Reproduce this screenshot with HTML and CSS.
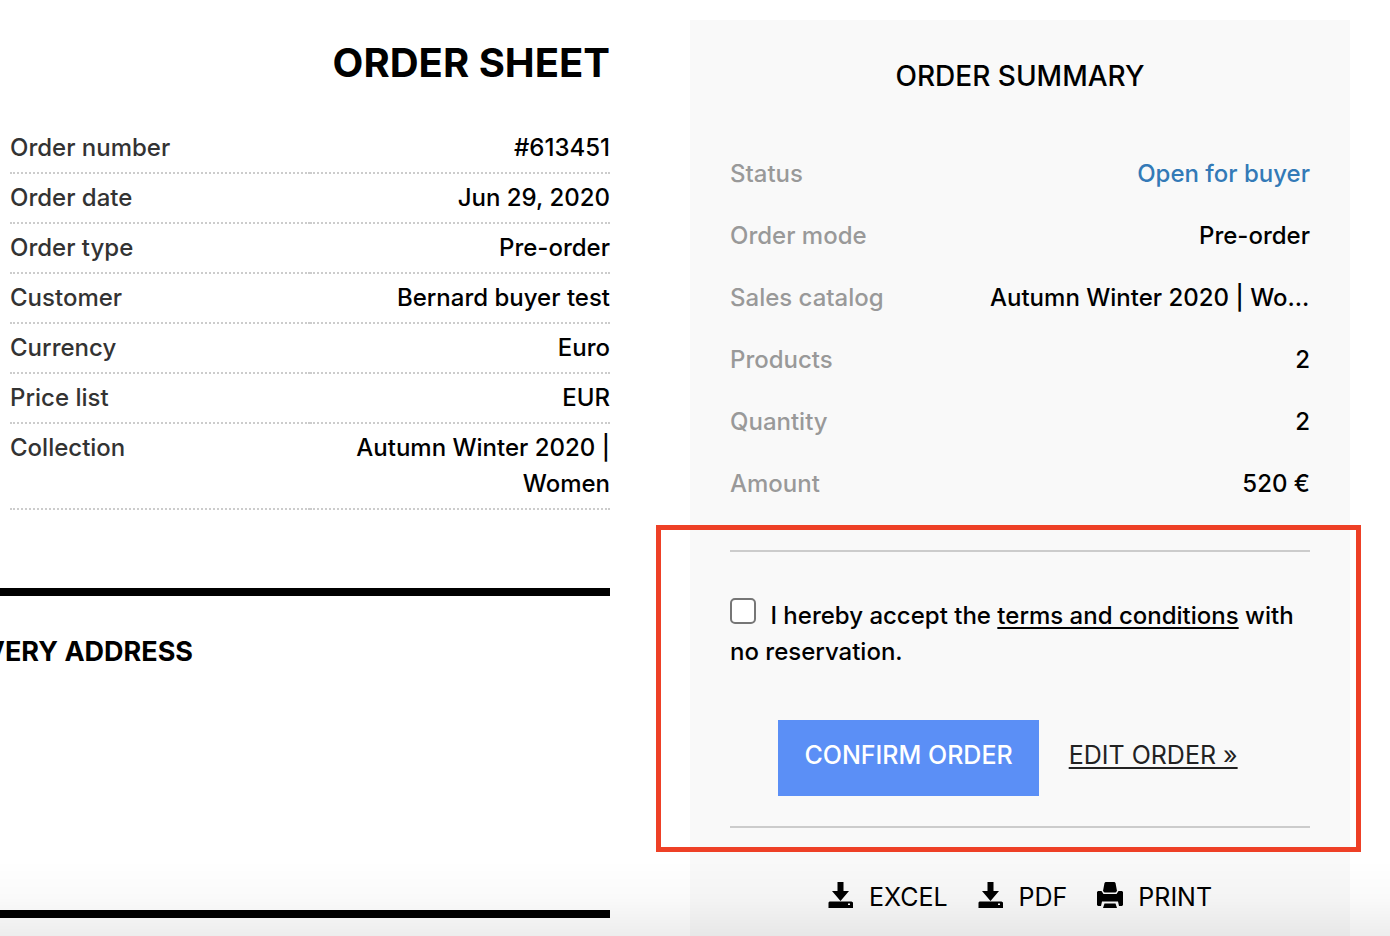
FILE: index.html
```html
<!DOCTYPE html>
<html lang="en">
<head>
  <meta charset="utf-8">
  <title>Order Sheet</title>
  <link rel="stylesheet" href="styles.css">
</head>
<body>
  <div class="page">
    <main class="sheet">
      <h1>ORDER SHEET</h1>
      <table class="details">
        <tbody>
          <tr><th scope="row">Order number</th><td>#613451</td></tr>
          <tr><th scope="row">Order date</th><td>Jun 29, 2020</td></tr>
          <tr><th scope="row">Order type</th><td>Pre-order</td></tr>
          <tr><th scope="row">Customer</th><td>Bernard buyer test</td></tr>
          <tr><th scope="row">Currency</th><td>Euro</td></tr>
          <tr><th scope="row">Price list</th><td>EUR</td></tr>
          <tr><th scope="row">Collection</th><td>Autumn Winter 2020 | Women</td></tr>
        </tbody>
      </table>
      <section class="address">
        <h2>DELIVERY ADDRESS</h2>
      </section>
    </main>

    <aside class="summary">
      <h2>ORDER SUMMARY</h2>
      <dl>
        <div><dt>Status</dt><dd class="open">Open for buyer</dd></div>
        <div><dt>Order mode</dt><dd>Pre-order</dd></div>
        <div><dt>Sales catalog</dt><dd class="catalog">Autumn Winter 2020 | Wo...</dd></div>
        <div><dt>Products</dt><dd>2</dd></div>
        <div><dt>Quantity</dt><dd>2</dd></div>
        <div><dt>Amount</dt><dd>520 €</dd></div>
      </dl>

      <form class="confirm">
        <p class="terms">
          <input type="checkbox" id="accept">
          <label for="accept">I hereby accept the <a href="#">terms and conditions</a> with no reservation.</label>
        </p>
        <div class="actions">
          <button type="button">CONFIRM ORDER</button>
          <a href="#">EDIT ORDER »</a>
        </div>
        <div class="highlight"></div>
      </form>

      <nav class="exports">
        <a href="#">
          <svg width="26" height="26" viewBox="0 0 26 26"><path d="M9.500 0h6v9h5.500l-8.500 10L4 9h5.500zM1.500 19.500h22l1.500 1v5.500H0.500v-5.500z"/><path fill="#fff" d="M20 21.500h2v1.500h-2z"/></svg>
          EXCEL
        </a>
        <a href="#">
          <svg width="26" height="26" viewBox="0 0 26 26"><path d="M9.500 0h6v9h5.500l-8.500 10L4 9h5.500zM1.500 19.500h22l1.500 1v5.500H0.500v-5.500z"/><path fill="#fff" d="M20 21.500h2v1.500h-2z"/></svg>
          PDF
        </a>
        <a href="#">
          <svg width="26" height="26" viewBox="0 0 26 26"><path d="M8.500 0h9l1 1 1.500 8-1.500 1.500H7.500L6 9l1.500-8zM1 9h3.500l2 3h13l2-3H25l1 1v13l-1 1h-3l-1-4.500H5L4 24H1l-1-1V10zM7.500 21.500h11l1.500 4.500H6z"/></svg>
          PRINT
        </a>
      </nav>
    </aside>
  </div>
  <div class="fade"></div>
</body>
</html>
```
FILE: styles.css
```css
* {
  box-sizing: border-box;
}
body {
  margin: 0;
  background: #fff;
  color: #000;
  font-family: Inter, "Liberation Sans", sans-serif;
  font-size: 24px;
  font-weight: 500;
  line-height: 36px;
}
h1, h2, p, dl, dd {
  margin: 0;
}
a {
  color: inherit;
  text-decoration-thickness: 2px;
  text-underline-offset: 3px;
}
.page {
  display: grid;
  grid-template-columns: 61fr 66fr;
  gap: 80px;
  min-height: 100vh;
  padding: 20px 40px 0 0;
  overflow: hidden;
}

/* order sheet */
h1 {
  margin: 18px 0 36px;
  font-size: 40px;
  line-height: 50px;
  text-align: right;
}
.details {
  width: calc(100% - 10px);
  margin-left: 10px;
  border-spacing: 0;
  table-layout: fixed;
}
.details th, .details td {
  padding: 6px 0;
  border-bottom: 2px dotted #ccc;
  vertical-align: top;
}
.details th {
  color: #333;
  font-weight: 500;
  text-align: left;
}
.details td {
  text-align: right;
}
.address {
  height: 330px;
  margin-top: 78px;
  padding-top: 38px;
  border-top: 8px solid #000;
  border-bottom: 8px solid #000;
}
.address h2 {
  margin-left: -74px;
  font-size: 27px;
  font-weight: 700;
}

/* order summary */
.summary {
  padding: 38px 40px 0;
  background: #f9f9f9;
}
.summary h2 {
  margin-bottom: 62px;
  font-size: 28px;
  font-weight: 500;
  text-align: center;
}
dl div {
  display: flex;
  justify-content: space-between;
  margin-bottom: 26px;
}
dt {
  color: #999;
}
.open {
  color: #337ab7;
}
.catalog {
  width: 320px;
  white-space: nowrap;
}
.confirm {
  position: relative;
  margin-top: 48px;
  border-top: 2px solid #ccc;
  border-bottom: 2px solid #ccc;
  padding: 46px 0 30px;
}
.terms input {
  appearance: none;
  width: 26px;
  height: 26px;
  margin: 0 8px 0 0;
  border: 2px solid #767676;
  border-radius: 5px;
  background: #fff;
  vertical-align: 0;
}
.actions {
  display: flex;
  justify-content: center;
  gap: 30px;
  margin-top: 50px;
  padding-right: 24px;
  font-size: 25px;
  font-weight: 400;
  line-height: 70px;
}
.actions button {
  height: 76px;
  padding: 0 26px 6px;
  border: 0;
  background: #5b8ff6;
  color: #fff;
  font: inherit;
  font-weight: 500;
}
.actions a {
  color: #222;
}
.highlight {
  position: absolute;
  inset: -27px -51px -26px -74px;
  border: 5px solid #ee4026;
  pointer-events: none;
}
.exports {
  display: flex;
  justify-content: center;
  gap: 30px;
  margin-top: 51px;
  font-size: 25px;
  font-weight: 400;
}
.exports a {
  display: flex;
  gap: 15px;
  text-decoration: none;
}
.exports svg {
  margin-top: 3px;
}

/* shadow along the bottom of the window */
.fade {
  position: fixed;
  inset: auto 0 0;
  height: 76px;
  background: linear-gradient(transparent, rgba(0, 0, 0, .02) 50%, rgba(0, 0, 0, .07));
  pointer-events: none;
}
```
